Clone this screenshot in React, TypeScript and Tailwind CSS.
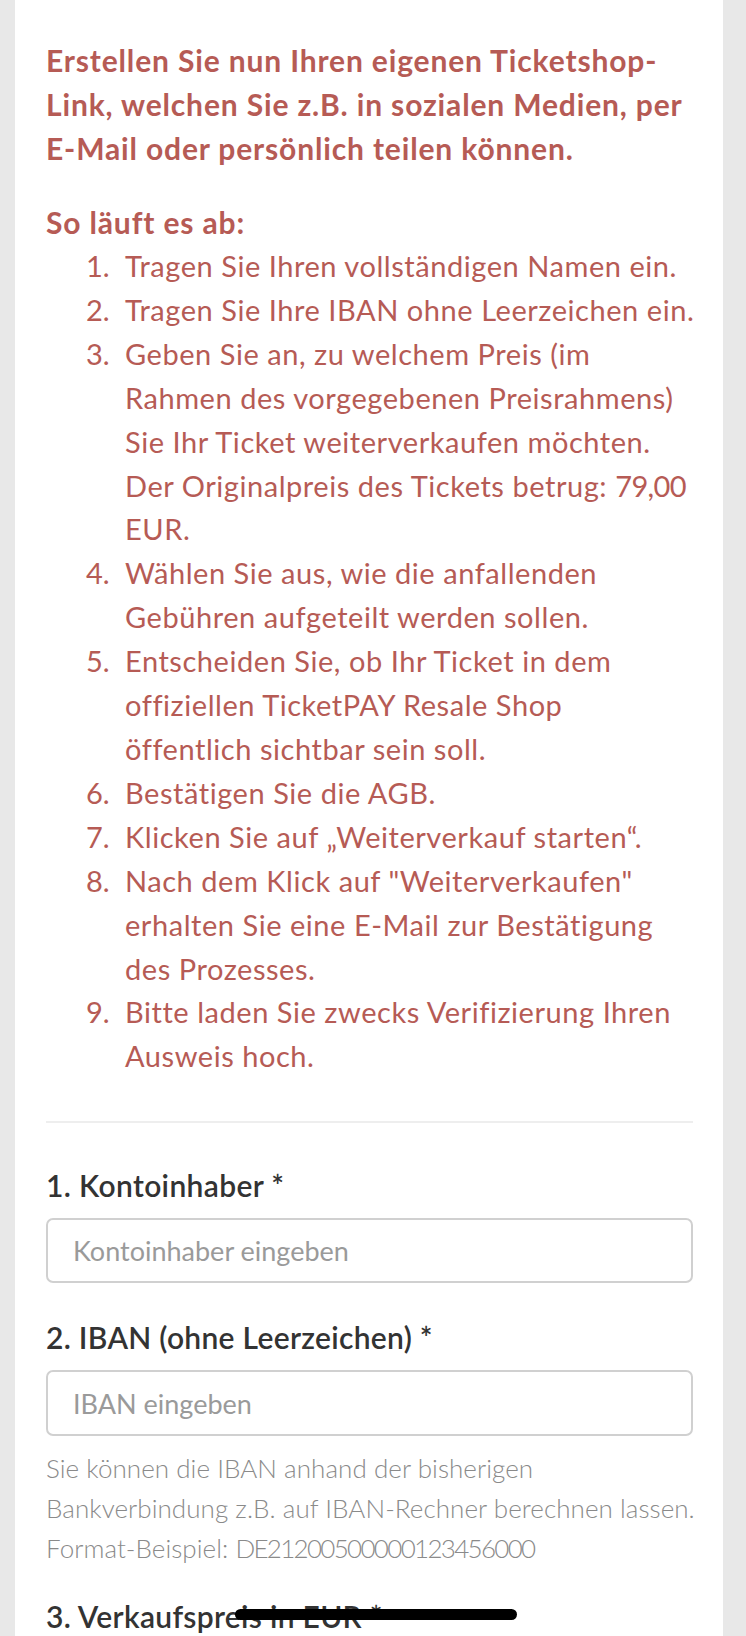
import React from "react";

const steps: React.ReactNode[][] = [
  ["Tragen Sie Ihren vollständigen Namen ein."],
  ["Tragen Sie Ihre IBAN ohne Leerzeichen ein."],
  [
    "Geben Sie an, zu welchem Preis (im",
    "Rahmen des vorgegebenen Preisrahmens)",
    "Sie Ihr Ticket weiterverkaufen möchten.",
    <>
      Der Originalpreis des Tickets betrug:{" "}
      <span className="tracking-[-0.6px]">79,00</span>
    </>,
    "EUR.",
  ],
  ["Wählen Sie aus, wie die anfallenden", "Gebühren aufgeteilt werden sollen."],
  [
    "Entscheiden Sie, ob Ihr Ticket in dem",
    "offiziellen TicketPAY Resale Shop",
    "öffentlich sichtbar sein soll.",
  ],
  ["Bestätigen Sie die AGB."],
  ["Klicken Sie auf „Weiterverkauf starten“."],
  [
    'Nach dem Klick auf "Weiterverkaufen"',
    "erhalten Sie eine E-Mail zur Bestätigung",
    "des Prozesses.",
  ],
  ["Bitte laden Sie zwecks Verifizierung Ihren", "Ausweis hoch."],
];

const App = () => {
  return (
    <div className="h-[1636px] overflow-hidden bg-[#e8e8e8] pl-[15px] pr-[23px] font-['Lato','Liberation_Sans',sans-serif]">
      <div className="relative min-h-full bg-white pl-[31px] pr-[30px] pt-[38px]">
        <div className="text-[30px] font-bold leading-[44px] tracking-[0.85px] text-[#b65b55]">
          <p className="whitespace-nowrap">
            Erstellen Sie nun Ihren eigenen Ticketshop-
            <br />
            Link, welchen Sie z.B. in sozialen Medien, per
            <br />
            E-Mail oder persönlich teilen können.
          </p>
          <p className="mt-[30px]">So läuft es ab:</p>
        </div>

        <ol className="pl-[40px] text-[29px] leading-[43.9px] tracking-[0.55px] text-[#b65b55]">
          {steps.map((lines, i) => (
            <li key={i} className="flex">
              <span className="w-[39px] shrink-0 tracking-normal">{i + 1}.</span>
              <span className="whitespace-nowrap">
                {lines.map((l, j) => (
                  <React.Fragment key={j}>
                    {l}
                    {j < lines.length - 1 && <br />}
                  </React.Fragment>
                ))}
              </span>
            </li>
          ))}
        </ol>

        <hr className="mt-[43px] border-t-2 border-[#eeeeee]" />

        <form className="pt-[40px]">
          <label className="block text-[30px] font-semibold leading-[44px] tracking-[0.35px] text-[#333333]">
            1. Kontoinhaber *
          </label>
          <input
            type="text"
            placeholder="Kontoinhaber eingeben"
            className="mt-[11px] block h-[65px] w-full rounded-[7px] border-2 border-[#d0d0d0] px-[25px] text-[27px] placeholder:text-[#9a9a9a]"
          />

          <label className="mt-[32px] block text-[30px] font-semibold leading-[44px] tracking-[0.3px] text-[#333333]">
            2. IBAN (ohne Leerzeichen) *
          </label>
          <input
            type="text"
            placeholder="IBAN eingeben"
            className="mt-[11px] block h-[66px] w-full rounded-[7px] border-2 border-[#d0d0d0] px-[25px] text-[27px] placeholder:text-[#9a9a9a]"
          />
          <p className="mt-[12px] whitespace-nowrap text-[26px] font-light leading-[40px] tracking-[0.05px] text-[#8a8a8a]">
            Sie können die IBAN anhand der bisherigen
            <br />
            Bankverbindung z.B. auf IBAN-Rechner berechnen lassen.
            <br />
            Format-Beispiel: <span className="tracking-[-1.7px]">DE21200500000123456000</span>
          </p>

          <label className="mt-[26px] block text-[30px] font-semibold leading-[44px] tracking-[0.3px] text-[#333333]">
            3. Verkaufspreis in EUR *
          </label>
        </form>

        <div className="absolute left-[220px] top-[1609px] h-[11px] w-[282px] rounded-full bg-black" />
      </div>
    </div>
  );
};

export default App;
